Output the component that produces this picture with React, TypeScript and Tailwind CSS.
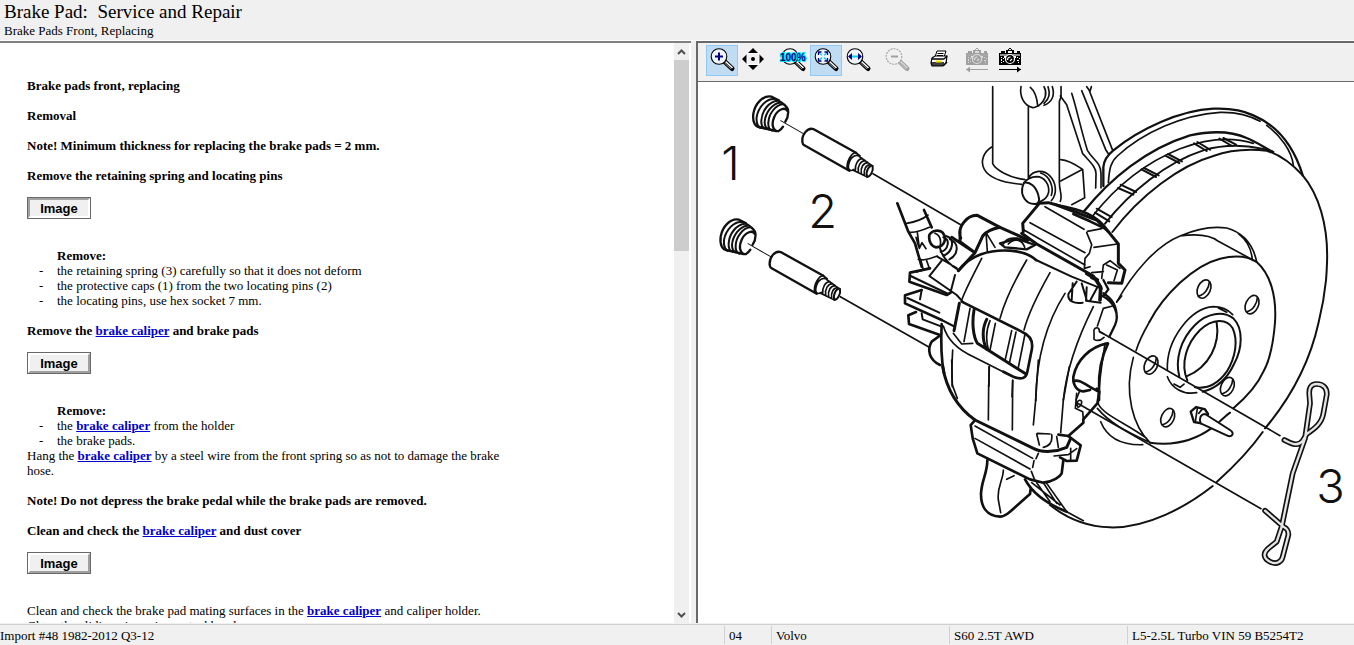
import type { ReactNode } from 'react'

interface ToolProps {
  label: string
  active?: boolean
  disabled?: boolean
  className?: string
  children: ReactNode
}

function ToolButton({ label, active, disabled, className = '', children }: ToolProps) {
  return (
    <button
      aria-label={label}
      disabled={disabled}
      className={`w-8 h-[31px] shrink-0 border ${active ? 'bg-[#c0dcf3] border-[#90c8f6]' : 'border-transparent'} ${className}`}
    >
      <svg viewBox="1 1 30 29" className="block w-full h-full">{children}</svg>
    </button>
  )
}

function Lens({ color = '#000', children }: { color?: string; children?: ReactNode }) {
  const off = color !== '#000'
  return (
    <>
      <path d="M18.5 16.5 L26 23.5" stroke={color} strokeWidth="5" strokeLinecap="round" />
      <path d="M19.5 16.5 L26.5 23" stroke={off ? '#d8d8d8' : '#fff'} strokeWidth="1.6" />
      <path d="M18.5 18 L25 24" stroke={off ? '#c8c8c8' : '#909090'} strokeWidth="1" />
      <circle cx="13" cy="11.5" r="7.8" fill={off ? '#f0f0f0' : '#eef4fa'} stroke={color} strokeWidth="1.1" strokeDasharray={off ? '2 1' : undefined} />
      {children}
    </>
  )
}

function Camera({ color, back }: { color: string; back?: boolean }) {
  const light = back ? '#dcdcdc' : '#fff'
  const mid = back ? '#a8a8a8' : '#909090'
  return (
    <g shapeRendering="crispEdges">
      <path d="M5 8h22v12H5z" fill={color} />
      <path d="M7 6h4v2H7zM12 5h8v3h-8zM23 6h3v2h-3z" fill={color} />
      <path d="M13 5.500l3-2 3 2" fill="none" stroke={color} />
      <path d="M14 6h4v2h-4z" fill={light} />
      <path d="M6 9h20v2H6z" fill={mid} />
      <path d="M7 12h1v1H7zM9 13h1v1H9zM7 14h1v2H7zM9 16h1v1H9zM7 17h1v1H7zM23 12h1v1h-1zM25 13h1v1h-1zM23 15h2v1h-2zM24 17h1v1h-1zM10 11h2v2h-2zM20 11h2v2h-2z" fill={light} />
      <g shapeRendering="auto">
        <circle cx="16" cy="14" r="4.500" fill={color} stroke={light} strokeWidth="1.200" />
        <path d="M13.500 15c0-2 1-3 3-3M16 16l2-2" fill="none" stroke={light} strokeWidth="1.200" />
      </g>
      <path d="M5 24h22v1H5z" fill={color} />
      <path d={back ? 'M5 24.500l4-3v6z' : 'M27 24.500l-4-3v6z'} fill={color} shapeRendering="auto" />
    </g>
  )
}

function Toolbar() {
  return (
    <div className="h-[39px] shrink-0 flex bg-[#f0f0f0] border-b border-[#696969] pl-2 pt-[2px]">
      <ToolButton label="Zoom in" active>
        <Lens><path d="M9 11.500h8M13 7.500v8" stroke="#000080" strokeWidth="2" /></Lens>
      </ToolButton>
      <ToolButton label="Pan">
        <path d="M15 3l5 5H10zM15 25l5-5H10zM4 14l5-5v10zM26 14l-5-5v10z" />
        <path d="M9 8.500h12v11H9z" fill="none" stroke="#fff" />
        <circle cx="15" cy="14" r="2" />
      </ToolButton>
      <ToolButton label="Actual size" className="ml-[7px]">
        <Lens>
          <text
            x="3"
            y="16"
            fontSize="10"
            fill="#000080"
            stroke="#00e5ff"
            strokeWidth="2"
            paintOrder="stroke"
            className="font-['Liberation_Sans',sans-serif] font-bold"
          >
            100%
          </text>
        </Lens>
      </ToolButton>
      <ToolButton label="Fit to window" active className="ml-px">
        <Lens>
          <path d="M9 7.500l8 8M17 7.500l-8 8" stroke="#22ccee" strokeWidth="1.500" strokeDasharray="4 3" />
          <path d="M8.500 10V7h3M14.500 7h3v3M17.500 13v3h-3M11.500 16h-3v-3" fill="none" stroke="#000080" strokeWidth="1.300" />
        </Lens>
      </ToolButton>
      <ToolButton label="Fit to width">
        <Lens>
          <path d="M7 11.500h12" stroke="#00d5f0" strokeWidth="2" />
          <path d="M6 11.500l4-3.500v7zM20 11.500l-4-3.500v7z" fill="#000080" />
        </Lens>
      </ToolButton>
      <ToolButton label="Zoom out" disabled className="ml-[7px]">
        <Lens color="#a0a0a0"><path d="M10 11.500h7" stroke="#a0a0a0" strokeWidth="2" /></Lens>
      </ToolButton>
      <ToolButton label="Print" className="ml-[10px]">
        <path d="M12 12l2-6h9l-2 6z" fill="#fff" stroke="#000" />
        <path d="M14.500 8.500h6M14 10.500h6" stroke="#000" />
        <path d="M9 13l3-2h12l-1 7-3 3H9l-1-3z" fill="#fff" stroke="#000" strokeWidth="1.200" />
        <path d="M9 14h12M8 18h13M21 14l3-3M9 20h12l3-3" fill="none" stroke="#000" strokeWidth="1.300" />
        <path d="M13 16.500h6" stroke="#f0e000" strokeWidth="2" />
      </ToolButton>
      <ToolButton label="Previous image" disabled className="ml-[6px]"><Camera color="#a0a0a0" back /></ToolButton>
      <ToolButton label="Next image" className="ml-px"><Camera color="#000" /></ToolButton>
    </div>
  )
}

// Protective cap, locating pin and the axis that runs through both
function PinSet() {
  return (
    <>
      <path strokeWidth="7" d="M236 55 L215 44 C190 38 165 65 160 95 C157 120 165 135 180 136" />
      <path strokeWidth="6" d="M224 51 C200 48 175 75 170 105 C168 125 175 138 186 138M233 56 C208 58 186 85 184 115 C183 130 188 138 196 140M240 62 C218 64 196 90 194 120 C194 134 200 140 206 142M248 67 C226 70 206 95 205 122 C204 138 210 144 216 146" />
      <path strokeWidth="7" d="M236 56 C250 66 262 72 264 84 C266 98 262 110 256 119M263 88 C257 74 234 80 223 104 C212 128 220 150 236 147 C242 144 246 139 249 134M180 136 L228 147" />
      <path strokeWidth="3" d="M242 116 L310 155" />
      <path strokeWidth="7" d="M468 212 L340 141 C322 136 305 158 307 180 C308 186 310 189 313 190 L448 266" />
      <path d="M468 212 C454 212 438 240 442 262 M478 222 C462 214 446 232 445 256 C446 266 454 268 462 262M468 212 L480 222" />
      <path strokeWidth="5" d="M478 224 L515 250 M458 264 L502 285 M488 230 C474 230 464 248 466 266M496 236 C482 236 472 252 475 270M504 242 C490 242 481 256 484 275M511 248 C498 248 490 262 493 281" />
      <path strokeWidth="6" d="M518 252 C508 248 496 268 501 284 C510 286 521 268 518 252Z" />
    </>
  )
}

const wheelHoles = [[1521, 621], [1665, 668], [1362, 849], [1591, 914], [1412, 1007]]

const spring =
  'M613 480 C640 495 655 498 668 482 L680 462 C705 445 725 430 730 400 L740 345 C742 325 730 312 710 312 C692 312 686 325 688 345 L690 370 L675 475 L638 580 L605 740 L590 785 L565 805 C548 820 550 835 570 845 C590 855 605 845 608 830 L625 765 C626 750 620 745 610 740 L555 692'

function BrakeDrawing() {
  return (
    <svg
      viewBox="3 0 1968 1626"
      preserveAspectRatio="xMinYMin meet"
      className="block w-full"
      fill="none"
      stroke="#111"
      strokeWidth="5"
      strokeLinecap="round"
      strokeLinejoin="round"
      role="img"
      aria-label="Brake caliper, exploded view"
    >
      <g transform="translate(9 0)"><PinSet /></g>
      <g transform="translate(-89 369)"><PinSet /></g>
      <path d="M528 275 L791 428M430 644 L694 794" />

      {/* strut and mounting bolts */}
      <g transform="translate(579 0)">
        <path d="M308 14 V245 C318 265 360 288 405 293M305 195 C280 210 270 240 283 262 C300 292 350 303 395 307M415 75 V285M513 14 V45 C512 50 508 55 508 60 V300 C508 330 518 338 511 358" />
        <path d="M393 14 C388 40 400 70 428 77 C436 77 440 72 446 72M421 16 C436 28 441 48 443 72M462 14 C472 32 468 54 446 71M462 70 C484 62 496 42 487 14M474 14 C482 36 474 54 462 64" />
        <path strokeWidth="6" d="M398 312 C390 340 408 368 436 366 C446 366 450 355 445 340 C438 314 420 298 402 302 Z" />
        <path d="M402 302 C410 292 425 285 440 284 C465 284 478 310 476 330 C472 350 460 354 444 362M415 288 C430 264 460 262 478 280 C500 302 502 335 484 356M452 273 C480 282 492 316 484 340" />
        <path d="M512 233 C530 234 545 240 578 262 L584 347 L545 368M578 262 L512 297" />
        <path d="M511 42 L530 68 L578 215 C600 240 618 255 618 275 L617 318M545 34 C560 80 572 140 592 205 C610 235 632 240 633 275 V318M575 26 L648 205 L657 218M597 24 L668 205M590 14 L600 28 L604 14" />
      </g>

      {/* disc and dust shield */}
      <g transform="translate(1149 0)">
        <path strokeWidth="7" d="M70 312 V255 C72 232 85 217 100 205 C180 140 300 85 400 80 C450 78 490 85 520 100 C605 136 645 205 668 280" />
        <path d="M85 302 C88 260 92 240 112 222 C190 150 310 98 420 91 C460 90 500 95 540 118M560 130 C600 160 635 205 640 250" />
        <path strokeWidth="7" d="M12 388 C90 290 200 200 330 160 C400 145 460 150 500 168 C530 180 550 195 575 208" />
        <path strokeWidth="6" d="M75 425 C150 330 260 240 370 205 C440 185 520 188 580 210" />
        <path d="M38 402 C110 310 200 240 300 200 C380 170 450 162 520 184" />
        <path strokeWidth="6" d="M97 450 C180 340 300 250 400 222 C460 200 520 202 560 206 C600 218 640 250 668 280 C715 335 745 430 741 540 Q740 570 738 594" />
        <path strokeWidth="6" d="M50 380 L95 405M45 392 L88 418M122 308 L168 330M114 318 L160 338M192 258 L236 280M184 262 L228 285M264 216 L306 238M256 221 L298 243M352 180 L390 203M342 184 L380 207M430 168 L468 188M418 170 L456 192" />
        <path d="M110 660 C160 570 230 490 300 462 C350 440 400 432 440 438 C490 452 520 490 530 540M300 462 C350 455 390 458 415 478 L530 540M475 455 C505 478 515 505 517 535" />
        <path strokeWidth="6" d="M208 720 C250 640 340 550 420 530 C460 520 500 520 530 540 C570 575 590 640 585 720" />
      </g>

      {/* hub, wheel stud and retaining spring */}
      <g transform="translate(1149 594)">
        <path strokeWidth="6" d="M738 0 C733 50 725 90 716 126 C690 245 635 350 555 445M548 456 C510 510 450 570 410 606M398 618 C320 680 200 745 90 742 C20 740 -40 715 -90 675" />
        <path strokeWidth="6" d="M585 126 C580 190 570 240 550 275 C530 320 495 355 460 385M450 398 C440 405 430 415 418 425M398 442 C340 485 280 498 210 488" />
        <path d="M210 488 C160 440 130 340 160 232M168 212 C178 180 192 154 208 126M75 190 C64 260 54 330 55 372 C70 405 140 430 200 475M62 425 C80 470 120 496 188 494M52 385 C90 430 140 455 205 485M110 66 L125 48" />
        <path d="M262 270 C258 180 330 85 400 80 C430 80 445 90 458 104M262 290 C275 325 310 345 350 338M282 312 L300 322 L312 312M415 84 L440 97" />
        <path strokeWidth="6" d="M298 290 C285 240 300 180 345 135 C380 98 430 92 460 115 C490 145 488 205 462 252 C442 295 410 325 368 335" />
        <path strokeWidth="6" d="M322 302 C300 250 320 190 360 150 C398 115 440 115 458 145 C474 180 468 230 440 275 C415 310 385 328 345 322M410 128 C420 190 390 260 318 290" />
        <path d="M60 155 L600 467M-10 368 L543 686" />
        <path strokeWidth="7" d="M332 395 L348 381 L374 387 L384 402 L365 430 L342 426 Z" fill="#fff" />
        <path strokeWidth="6" d="M375 402 L450 450 C466 460 455 474 440 466 L362 430 C356 416 362 402 375 402Z" fill="#fff" />
        <path d="M352 384 L346 424M366 388 L356 400" />
        <path d={spring} strokeWidth="17" />
        <path d={spring} stroke="#e4e4e4" strokeWidth="7" />
      </g>
      {wheelHoles.map(([x, y]) => (
        <g key={x} transform={`translate(${x} ${y}) rotate(24)`}>
          <ellipse rx="19" ry="29" />
          <path d="M6 -26 C12 -10 10 14 -6 26" />
        </g>
      ))}

      {/* caliper, upper half */}
      <g transform="translate(579 354)">
        <path strokeWidth="8" d="M22 10 L55 95 L75 130 L95 200M102 30 L125 82M118 105 C125 90 150 88 158 98 C168 110 168 130 150 140 L138 142 C125 140 115 125 118 105Z" />
        <path d="M50 70 C75 66 98 58 114 45M60 97 C80 98 100 90 118 82M82 97 L88 145 L96 128 L108 146M78 112 L86 140M85 178 C100 184 120 175 142 168M92 178 L100 210M110 182 L118 205M135 100 C150 106 154 122 150 140" />
        <path strokeWidth="6" d="M160 112 C182 118 175 150 152 156M168 108 C196 116 190 154 160 168M180 118 C210 130 204 165 178 178M150 145 C158 175 180 195 205 210M142 170 L200 204" />
        <path strokeWidth="9" d="M185 112 L255 158 L205 212M212 115 C200 80 232 45 262 46 L330 82 L415 120M210 95 V125 L255 158 L278 108 C290 92 310 86 330 82" />
        <path d="M288 98 L292 155M288 98 L315 142M340 132 C350 110 385 108 415 128M355 132 C370 115 395 115 404 142" />
        <path strokeWidth="7" d="M330 130 L380 116 L435 135 L410 148 L345 142 Z" />
        <path strokeWidth="9" d="M400 95 L398 70 L448 10 L475 8 L500 15 L620 60 L655 95 L685 132 V190 L705 210 L695 250 L655 248M395 100 L440 132 L610 228" />
        <path strokeWidth="8" d="M550 42 L600 64 L650 88M500 15 C570 28 625 44 655 95" />
        <path d="M420 68 L585 158M465 20 L582 88M592 94 L635 86M590 98 L605 134 L598 160 L585 175 L583 205M612 142 L682 132M402 90 L585 195M640 195 L660 182 L690 205M640 195 L635 235M650 195 L682 210 L672 242M583 205 L600 200M605 218 L640 215" />
        <path strokeWidth="11" d="M590 220 L615 235 L632 262 L630 300M605 232 L622 240" />
        <path strokeWidth="7" d="M640 240 L655 268 L640 288M632 285 C672 305 690 340 675 375 L658 410M640 280 C665 295 680 320 680 350" />
        <path strokeWidth="8" d="M205 212 C240 165 300 148 360 152 C400 155 425 168 438 180" />
        <path strokeWidth="6" d="M438 180 L545 230 L635 266" />
        <path d="M275 175 C250 225 230 260 215 300M410 180 C375 240 345 300 330 355M480 218 C445 280 415 340 402 390M525 280 C480 350 440 450 437 600M610 320 C570 400 530 500 520 600" />
        <path strokeWidth="6" d="M560 245 L535 282 C532 305 555 312 578 308M548 250 L545 300M575 250 L590 300M590 262 L588 302 L610 305M622 262 L600 302M588 302 L632 308" />
        <path d="M640 325 L668 318M640 325 L622 378M612 398 C608 380 630 378 628 395 L640 401M612 398 V418 C622 424 632 422 642 412" />
        <path strokeWidth="8" d="M652 430 C600 440 560 480 550 530 C548 555 560 572 580 574 L600 570M654 430 C634 470 625 520 627 572 V600M550 545 C565 532 595 562 627 575" />
        <path strokeWidth="8" d="M215 305 L395 395 C420 405 430 425 425 450 L412 515 C408 535 395 540 370 530 L340 515" />
        <path strokeWidth="9" d="M252 330 C245 370 250 410 262 430 L408 522M208 310 L192 392M290 358 C276 385 276 420 290 448" />
        <path d="M568 575 L558 600M240 325 L222 425M300 362 C288 390 288 425 296 452M316 370 L300 450M365 392 L345 482M378 396 L358 490M405 402 L385 502M190 400 L215 432 L248 430M160 378 C172 420 205 450 250 470 L345 518" />
        <path strokeWidth="8" d="M120 205 L60 218 L58 245 L170 285 L182 278M95 270 L45 286 V310 L155 360M78 336 L55 346 L57 372 L150 405" />
        <path strokeWidth="6" d="M62 228 L175 282M52 294 L148 338M95 270 L90 298M95 340 L98 358 L155 380M155 182 L118 228 L200 285 L218 305M195 225 L182 275M80 215 L115 205M155 360 L190 378" />
        <path strokeWidth="8" d="M155 372 C152 430 154 480 162 520M148 408 L125 425 C110 450 118 480 150 495" />
        <path d="M188 450 C185 500 185 530 187 560M298 500 L296 560M368 542 L366 590" />
      </g>

      {/* caliper, lower half */}
      <g transform="translate(609 834)">
        <path strokeWidth="9" d="M128 20 C140 90 170 140 225 180 L400 265 C430 280 470 275 500 262 L512 235" />
        <path d="M157 75 L172 115M266 75 L265 180M338 60 L337 210M407 120 L400 195M490 120 L482 218" />
        <path strokeWidth="8" d="M225 180 L212 195 L218 235 L232 280 L390 358 L430 368 C460 365 480 350 485 340 L490 300M475 224 L505 228 L542 256 L530 302 L500 303 L480 292" />
        <path d="M407 120V122M225 198 L398 295M225 235 L390 327M415 280 L408 296M402 302 L398 322M394 334 L404 360M410 222 L418 255M430 262 C448 258 458 245 455 224M412 220 L450 222M470 230 L475 262M512 265 V300M462 288 L505 284 L530 266" />
        <path strokeWidth="8" d="M505 228 L550 188 V178 L592 130 L598 95 L590 86" />
        <path d="M530 100 L526 145 L548 155 L550 178M534 142 C525 125 540 114 545 125 C545 135 538 140 534 142M155 0 L157 75M267 75 V20M415 0 L407 120M508 20 L490 120" />
        <path strokeWidth="8" d="M262 300 C262 340 245 360 243 400 C242 440 260 468 300 470 C320 470 340 445 390 402 L392 385M375 358 C400 405 450 435 500 455" />
        <path d="M310 330 C310 360 290 380 295 420 L302 458M320 358 L342 347M395 368 L480 435M410 368 L450 425M430 368 L470 430M440 370 L500 455M500 455 L550 482" />
      </g>

      <g fill="#111" stroke="none" fontSize="141" className="font-['Inter',sans-serif] font-light">
        <text x="73" y="293">1</text>
        <text x="334" y="438">2</text>
        <text x="1858" y="1263">3</text>
      </g>
    </svg>
  )
}

function ImageButton({ pressed }: { pressed?: boolean }) {
  return (
    <button className="block mt-[14px] mb-[29px] border border-[#696969]">
      <span
        className={`block w-[62px] h-5 leading-[18px] border-2 bg-[#f0f0f0] font-['Liberation_Sans',sans-serif] font-bold text-[13px] ${
          pressed ? 'border-t-[#a0a0a0] border-l-[#a0a0a0] border-r-white border-b-white' : 'border-t-white border-l-white border-r-[#a0a0a0] border-b-[#a0a0a0]'
        }`}
      >
        Image
      </span>
    </button>
  )
}

function CaliperLink() {
  return <a href="#caliper" className="font-bold text-[#0000cc] underline">brake caliper</a>
}

function Steps({ items }: { items: ReactNode[] }) {
  return (
    <>
      <p className="pl-[30px] font-bold">Remove:</p>
      <ul>
        {items.map((item, i) => (
          <li key={i} className="flex">
            <span className="w-[30px] shrink-0 pl-3">-</span>
            <span>{item}</span>
          </li>
        ))}
      </ul>
    </>
  )
}

function Article() {
  return (
    <article className="flex-1 min-w-0 overflow-hidden pl-[27px] pt-[35px]">
      <div className="max-w-[500px]">
        <h2 className="font-bold mb-[15px]">Brake pads front, replacing</h2>
        <h3 className="font-bold mb-[15px]">Removal</h3>
        <p className="font-bold mb-[15px]">Note! Minimum thickness for replacing the brake pads = 2 mm.</p>
        <h3 className="font-bold">Remove the retaining spring and locating pins</h3>
        <ImageButton pressed />
        <Steps
          items={[
            'the retaining spring (3) carefully so that it does not deform',
            'the protective caps (1) from the two locating pins (2)',
            'the locating pins, use hex socket 7 mm.',
          ]}
        />
        <h3 className="font-bold mt-[15px]">Remove the <CaliperLink /> and brake pads</h3>
        <ImageButton />
        <Steps items={[<>the <CaliperLink /> from the holder</>, 'the brake pads.']} />
        <p>Hang the <CaliperLink /> by a steel wire from the front spring so as not to damage the brake hose.</p>
        <p className="font-bold mt-[15px]">Note! Do not depress the brake pedal while the brake pads are removed.</p>
        <h3 className="font-bold mt-[15px]">Clean and check the <CaliperLink /> and dust cover</h3>
        <ImageButton />
        <p>Clean and check the brake pad mating surfaces in the <CaliperLink /> and caliper holder.</p>
        <p>Clean the sliding pins using a steel brush.</p>
      </div>
    </article>
  )
}

function ScrollBar() {
  return (
    <div className="w-[15px] shrink-0 flex flex-col bg-[#f0f0f0]">
      <button aria-label="Scroll up" className="h-[17px] flex items-center justify-center">
        <svg width="9" height="6" viewBox="0 0 9 6"><path d="M1 5l3.500-3.500L8 5" fill="none" stroke="#505050" strokeWidth="2" /></svg>
      </button>
      <div className="flex-1">
        <div className="h-[35%] bg-[#cdcdcd]" />
      </div>
      <button aria-label="Scroll down" className="h-[17px] flex items-center justify-center">
        <svg width="9" height="6" viewBox="0 0 9 6"><path d="M1 1l3.500 3.500L8 1" fill="none" stroke="#505050" strokeWidth="2" /></svg>
      </button>
    </div>
  )
}

export default function App() {
  return (
    <div className="h-screen flex flex-col overflow-hidden bg-[#f0f0f0] text-black font-['Liberation_Serif',serif] text-[13px] leading-[15px]">
      <header className="h-[41px] shrink-0 pl-1 pt-px border-b border-white">
        <h1 className="text-[19px] leading-[21px] whitespace-pre">Brake Pad:  Service and Repair</h1>
        <p className="pt-px">Brake Pads Front, Replacing</p>
      </header>

      <main className="flex-1 min-h-0 flex">
        <section className="flex-[691] min-w-0 flex bg-white border-t-2 border-[#808080] pr-[2px]">
          <Article />
          <ScrollBar />
        </section>
        <section className="flex-[658] min-w-0 ml-[5px] flex flex-col bg-white border-t-2 border-l-2 border-[#696969]">
          <Toolbar />
          <div className="flex-1 min-h-0 overflow-hidden">
            <BrakeDrawing />
          </div>
        </section>
      </main>

      <footer className="h-[21px] shrink-0 mt-px border-t border-[#d0d0d0] flex items-center whitespace-nowrap">
        <div className="flex-1 min-w-0 h-[18px] pt-[2px]">Import #48 1982-2012 Q3-12</div>
        <div className="w-[47px] h-[18px] border-l border-[#d0d0d0] pl-1 pt-[2px]">04</div>
        <div className="w-[178px] h-[18px] border-l border-[#d0d0d0] pl-1 pt-[2px]">Volvo</div>
        <div className="w-[178px] h-[18px] border-l border-[#d0d0d0] pl-1 pt-[2px]">S60 2.5T AWD</div>
        <div className="w-[227px] h-[18px] border-l border-[#d0d0d0] pl-1 pt-[2px]">L5-2.5L Turbo VIN 59 B5254T2</div>
      </footer>
    </div>
  )
}
